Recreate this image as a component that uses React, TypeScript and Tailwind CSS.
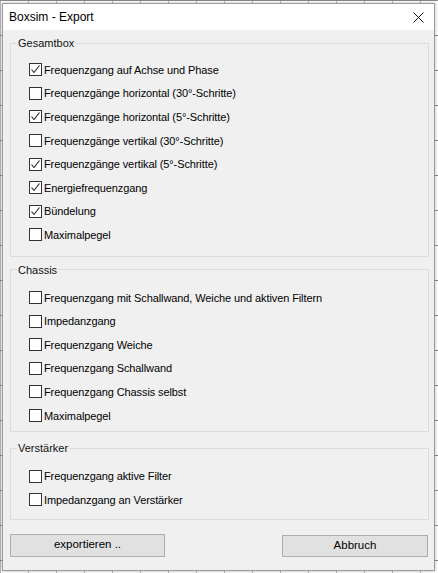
import React from "react";

type Item = { label: string; checked?: boolean };

const gesamtbox: Item[] = [
  { label: "Frequenzgang auf Achse und Phase", checked: true },
  { label: "Frequenzgänge horizontal (30°-Schritte)" },
  { label: "Frequenzgänge horizontal (5°-Schritte)", checked: true },
  { label: "Frequenzgänge vertikal (30°-Schritte)" },
  { label: "Frequenzgänge vertikal (5°-Schritte)", checked: true },
  { label: "Energiefrequenzgang", checked: true },
  { label: "Bündelung", checked: true },
  { label: "Maximalpegel" },
];

const chassis: Item[] = [
  { label: "Frequenzgang mit Schallwand, Weiche und aktiven Filtern" },
  { label: "Impedanzgang" },
  { label: "Frequenzgang Weiche" },
  { label: "Frequenzgang Schallwand" },
  { label: "Frequenzgang Chassis selbst" },
  { label: "Maximalpegel" },
];

const verstaerker: Item[] = [
  { label: "Frequenzgang aktive Filter" },
  { label: "Impedanzgang an Verstärker" },
];

function CheckRow({ item }: { item: Item }) {
  return (
    <label className="flex h-[23.6px] items-center pl-[18px]">
      <span className="flex h-[13px] w-[13px] items-center justify-center border border-[#333] bg-white">
        {item.checked && (
          <svg width="11" height="11" viewBox="0 0 11 11">
            <polyline
              points="1.5,5.5 4,8.5 9.5,1.5"
              fill="none"
              stroke="#222"
              strokeWidth="1.1"
            />
          </svg>
        )}
      </span>
      <span className="ml-[2px] text-[11px] leading-[14px] tracking-[-0.1px] text-black">
        {item.label}
      </span>
    </label>
  );
}

function Group({
  title,
  items,
  className,
}: {
  title: string;
  items: Item[];
  className: string;
}) {
  return (
    <fieldset className={`border border-[#dcdcdc] ${className}`}>
      <legend className="ml-[6px] px-[1px] text-[11px] leading-[14px] text-[#111]">
        {title}
      </legend>
      {items.map((item) => (
        <CheckRow key={item.label} item={item} />
      ))}
    </fieldset>
  );
}

export default function App() {
  return (
    <div
      className="h-[573px] w-[438px] overflow-hidden bg-white pl-[2px] pt-[3px] bg-[linear-gradient(#8a8a8a_1px,transparent_1px),linear-gradient(90deg,#b8b8b8_1px,transparent_1px)] bg-[size:100%_35px,28px_100%]"
      style={{ fontFamily: '"Liberation Sans", Arial, sans-serif' }}
    >
      <div className="flex h-[568px] w-[433px] flex-col border border-[#9a9a9a] bg-[#f0f0f0] shadow-[0_0_4px_rgba(0,0,0,0.25)]">
        <div className="flex h-[26px] items-center justify-between bg-white pl-[6px] pr-[10px]">
          <span className="text-[12px] text-black">Boxsim - Export</span>
          <svg width="11" height="11" viewBox="0 0 11 11">
            <path d="M0.5 0.5 L10.5 10.5 M10.5 0.5 L0.5 10.5" stroke="#111" strokeWidth="1" />
          </svg>
        </div>
        <div className="flex flex-1 flex-col pl-[7px] pr-[5px]">
          <Group title="Gesamtbox" items={gesamtbox} className="mt-[6px] pb-[9px] pt-[8px]" />
          <Group title="Chassis" items={chassis} className="mt-[6px] pb-[4px] pt-[9px]" />
          <Group title="Verstärker" items={verstaerker} className="mt-[9px] pb-[7px] pt-[9px]" />
          <div className="mt-[14px] flex items-start justify-between pr-[1px]">
            <button className="h-[23px] w-[155px] border border-[#adadad] bg-[#e1e1e1] text-[11.5px] text-black">
              exportieren ..
            </button>
            <button className="mt-[1px] h-[22px] w-[146px] border border-[#adadad] bg-[#e1e1e1] text-[11.5px] text-black">
              Abbruch
            </button>
          </div>
        </div>
      </div>
    </div>
  );
}
